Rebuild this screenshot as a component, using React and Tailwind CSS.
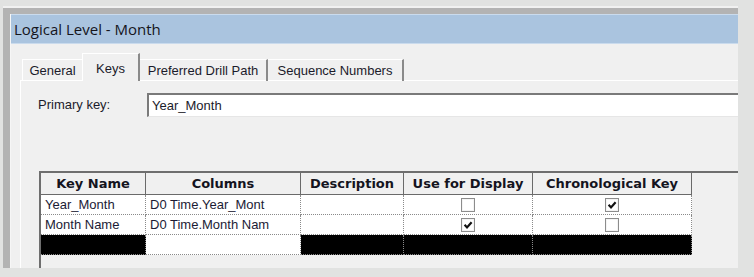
import React from "react";

const body = { fontFamily: '"Liberation Sans", Arial, sans-serif' };
const head = { fontFamily: '"DejaVu Sans", Verdana, sans-serif' };

function Check({ checked }) {
  return (
    <svg width="14" height="14" viewBox="0 0 14 14" className="block">
      <rect x="0.5" y="0.5" width="13" height="13" fill="#ffffff" stroke="#8c8c8c" />
      <rect x="1.5" y="1.5" width="11" height="11" fill="none" stroke="#f4f4f4" />
      {checked && (
        <path d="M3.6 6.8 L6 9.4 L10.6 4.2" stroke="#111111" strokeWidth="2.2" fill="none" />
      )}
    </svg>
  );
}

const cols = [
  { name: "Key Name", w: "w-[105px]" },
  { name: "Columns", w: "w-[155px]" },
  { name: "Description", w: "w-[103px]" },
  { name: "Use for Display", w: "w-[129px]" },
  { name: "Chronological Key", w: "w-[159px]" },
];

const rows = [
  { key: "Year_Month", col: "D0 Time.Year_Mont", disp: false, chrono: true },
  { key: "Month Name", col: "D0 Time.Month Nam", disp: true, chrono: false },
];

export default function App() {
  return (
    <div className="w-[754px] h-[277px] bg-[#e1e2e1] overflow-hidden pt-[6px] pl-[3px]" style={body}>
      <div className="w-[735px] h-[262px] overflow-hidden bg-[#b3b3b3] border-t-2 border-[#f1f1f1] pt-[6px] pl-[7px] flex">
        <div className="flex-1 flex flex-col border-l border-[#f6f6f6] bg-[#f0f0f0] overflow-hidden">
          {/* title bar */}
          <div className="h-[30px] shrink-0 bg-[#aac4df] border-t border-b border-[#cadbed] flex items-center pl-[3px]">
            <span className="text-[15px] text-[#15151c] leading-none" style={{ fontFamily: '"Open Sans", sans-serif' }}>
              Logical Level - Month
            </span>
          </div>

          {/* tabs */}
          <div className="flex items-end pl-[11px] pt-[9px] relative z-10 mb-[-1px] text-[13px] text-[#1b1b2b]">
            <div className="w-[60px] h-[22px] border-t border-l border-white flex items-center justify-center">
              General
            </div>
            <div className="w-[58px] h-[28px] bg-[#f0f0f0] border-t border-l border-white border-r-2 border-r-[#8a8a8a] flex items-center justify-center pt-[3px]">
              Keys
            </div>
            <div className="w-[128px] h-[22px] border-t border-white border-r-2 border-r-[#8a8a8a] flex items-center justify-center">
              Preferred Drill Path
            </div>
            <div className="w-[136px] h-[22px] border-t border-white border-r-2 border-r-[#8a8a8a] flex items-center justify-center">
              Sequence Numbers
            </div>
          </div>

          {/* panel */}
          <div className="flex-1 ml-[9px] border-t border-l border-white bg-[#f0f0f0] pt-[12px] pl-[17px] overflow-hidden">
            <div className="flex items-center">
              <div className="w-[109px] shrink-0 text-[13px] text-[#1b1b2b]">Primary key:</div>
              <div className="w-[620px] h-[24px] shrink-0 bg-white border-t-2 border-l-2 border-t-[#7a7a7a] border-l-[#7a7a7a] border-b border-b-[#e6e6e6] flex items-center pl-[3px] text-[13px] text-[#1b1b2b]">
                Year_Month
              </div>
            </div>

            <div className="mt-[54px] ml-[1px] w-[720px] h-[120px] border-t-2 border-l-2 border-[#6e6e6e] bg-[#f0f0f0]">
              <div className="flex">
                {cols.map((c) => (
                  <div
                    key={c.name}
                    className={`${c.w} h-[22px] shrink-0 border-r border-b border-[#6a6a6a] flex items-center justify-center text-[13px] font-bold text-[#14141e]`}
                    style={head}
                  >
                    {c.name}
                  </div>
                ))}
              </div>
              {rows.map((r) => (
                <div key={r.key} className="flex text-[13px] text-[#1b1b35]">
                  <div className="w-[105px] h-[20px] shrink-0 bg-white border-r border-b border-dotted border-[#8a8a8a] flex items-center pl-[4px]">
                    {r.key}
                  </div>
                  <div className="w-[155px] h-[20px] shrink-0 bg-white border-r border-b border-dotted border-[#8a8a8a] flex items-center pl-[4px]">
                    {r.col}
                  </div>
                  <div className="w-[103px] h-[20px] shrink-0 bg-white border-r border-b border-dotted border-[#8a8a8a]" />
                  <div className="w-[129px] h-[20px] shrink-0 bg-white border-r border-b border-dotted border-[#8a8a8a] flex items-center justify-center">
                    <Check checked={r.disp} />
                  </div>
                  <div className="w-[159px] h-[20px] shrink-0 bg-white border-r border-b border-dotted border-[#8a8a8a] flex items-center justify-center">
                    <Check checked={r.chrono} />
                  </div>
                </div>
              ))}
              <div className="flex">
                <div className="w-[105px] h-[20px] shrink-0 bg-black border-r border-b border-dotted border-[#8a8a8a]" />
                <div className="w-[155px] h-[20px] shrink-0 bg-white border-r border-b border-dotted border-[#8a8a8a]" />
                <div className="w-[103px] h-[20px] shrink-0 bg-black border-r border-b border-dotted border-[#8a8a8a]" />
                <div className="w-[129px] h-[20px] shrink-0 bg-black border-r border-b border-dotted border-[#8a8a8a]" />
                <div className="w-[159px] h-[20px] shrink-0 bg-black border-r border-b border-dotted border-[#8a8a8a]" />
              </div>
            </div>
          </div>
        </div>
      </div>
    </div>
  );
}
